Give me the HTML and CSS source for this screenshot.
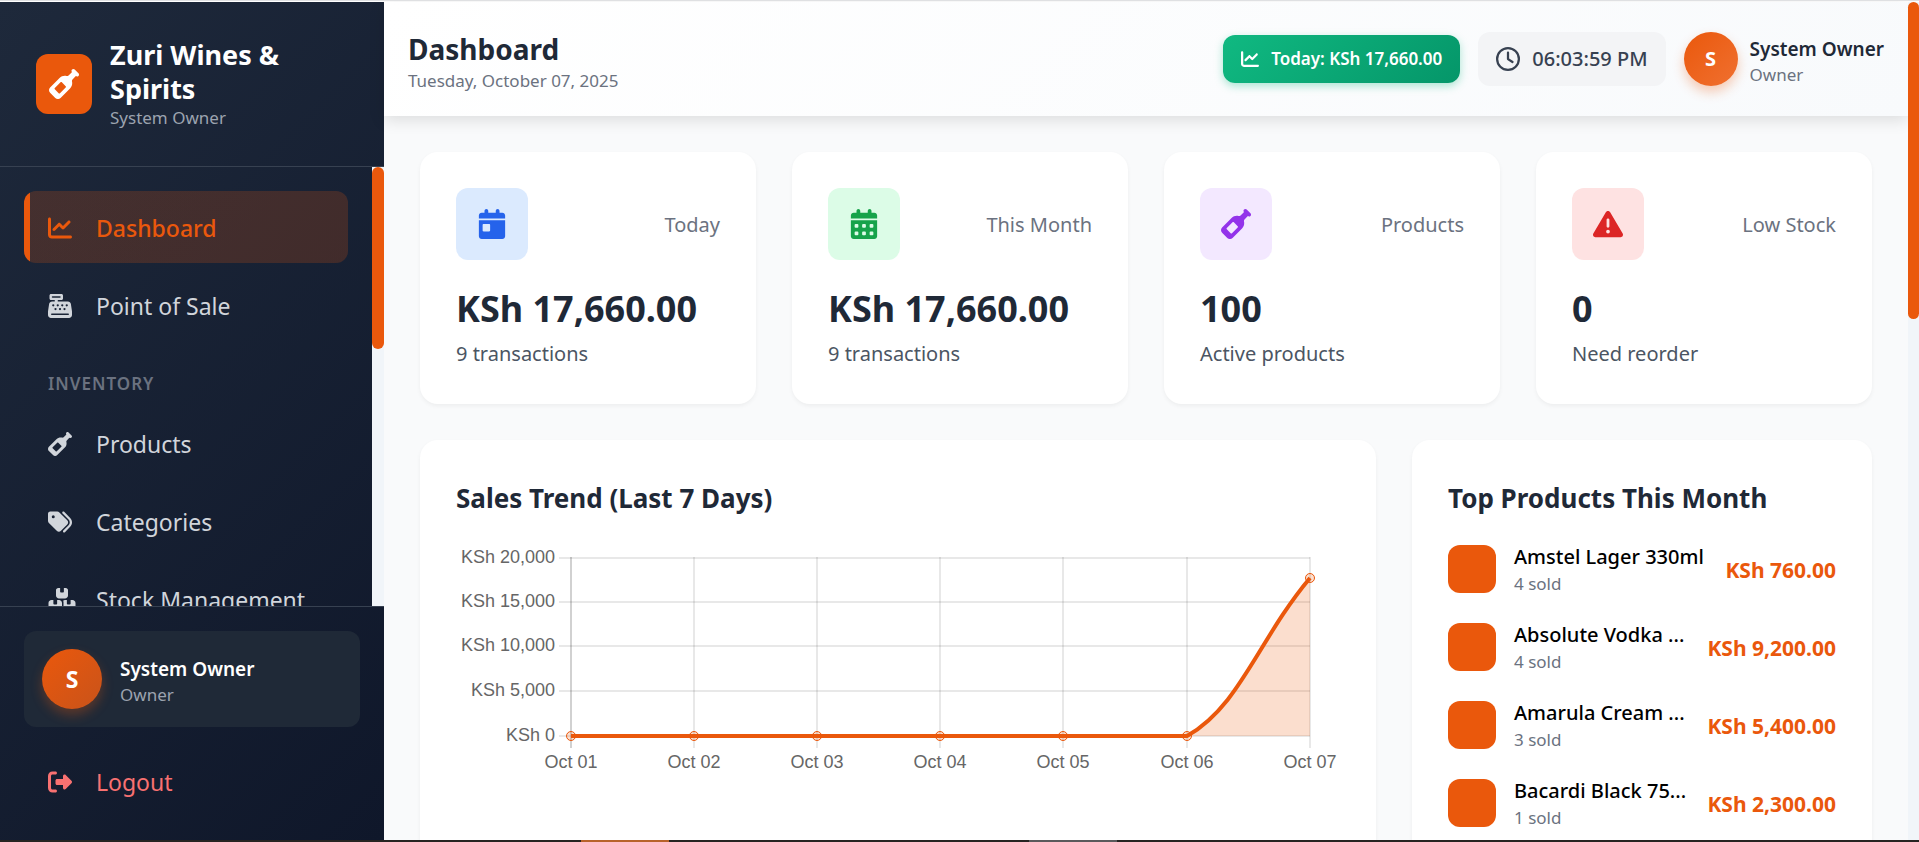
FILE: index.html
```html
<!DOCTYPE html>
<html lang="en">
<head>
<meta charset="utf-8">
<title>Dashboard - Zuri Wines &amp; Spirits</title>
<meta name="viewport" content="width=device-width, initial-scale=1">
<link rel="stylesheet" href="styles.css">
</head>
<body>
<svg class="sprite" aria-hidden="true">
  <symbol id="i-chart" viewBox="0 0 512 512"><path d="M64 64c0-17.700-14.300-32-32-32S0 46.300 0 64V400c0 44.200 35.800 80 80 80H480c17.700 0 32-14.300 32-32s-14.300-32-32-32H80c-8.800 0-16-7.200-16-16V64zm406.600 86.600c12.500-12.500 12.500-32.800 0-45.300s-32.800-12.500-45.300 0L320 210.700l-57.400-57.400c-12.500-12.500-32.800-12.500-45.300 0l-112 112c-12.500 12.500-12.500 32.800 0 45.300s32.800 12.500 45.300 0L240 221.300l57.400 57.400c12.500 12.500 32.800 12.500 45.300 0l128-128z"/></symbol>
  <symbol id="i-bottle" viewBox="0 0 512 512"><path d="M393.400 9.400c12.500-12.500 32.800-12.500 45.300 0l64 64c12.500 12.500 12.500 32.800 0 45.300c-11.800 11.800-30.700 12.500-43.200 1.900l-9.500 9.500-48.800 48.800c-9.200 9.200-11.500 22.900-8.600 35.600c9.400 40.900-1.900 85.600-33.800 117.500L197.300 493.300c-25 25-65.500 25-90.500 0l-88-88c-25-25-25-65.500 0-90.500L180.200 153.300c31.900-31.900 76.600-43.100 117.500-33.800c12.600 2.900 26.400 .5 35.500-8.600l48.800-48.800 9.500-9.500c-10.600-12.600-10-31.400 1.900-43.200zM99.300 347.300l65.400 65.400c6.200 6.200 16.400 6.200 22.600 0l97.400-97.400c6.200-6.200 6.200-16.400 0-22.600l-65.400-65.400c-6.200-6.200-16.400-6.200-22.600 0L99.300 324.700c-6.200 6.200-6.200 16.400 0 22.600z"/></symbol>
  <symbol id="i-register" viewBox="0 0 512 512"><path d="M64 0C46.300 0 32 14.300 32 32V96c0 17.700 14.300 32 32 32h80v32H87c-31.600 0-58.500 23.100-63.300 54.400L1.100 364.100C.4 368.800 0 373.600 0 378.400V448c0 35.300 28.700 64 64 64H448c35.300 0 64-28.700 64-64V378.400c0-4.800-.4-9.600-1.100-14.400L488.200 214.400C483.500 183.100 456.600 160 425 160H208V128h80c17.700 0 32-14.300 32-32V32c0-17.700-14.300-32-32-32H64zM96 48H256c8.800 0 16 7.200 16 16s-7.200 16-16 16H96c-8.800 0-16-7.200-16-16s7.200-16 16-16zM64 432c0-8.800 7.200-16 16-16H432c8.800 0 16 7.200 16 16s-7.200 16-16 16H80c-8.800 0-16-7.200-16-16zm48-168a24 24 0 1 1 0-48 24 24 0 1 1 0 48zm120-24a24 24 0 1 1 -48 0 24 24 0 1 1 48 0zM160 344a24 24 0 1 1 0-48 24 24 0 1 1 0 48zM328 240a24 24 0 1 1 -48 0 24 24 0 1 1 48 0zM256 344a24 24 0 1 1 0-48 24 24 0 1 1 0 48zM424 240a24 24 0 1 1 -48 0 24 24 0 1 1 48 0zM352 344a24 24 0 1 1 0-48 24 24 0 1 1 0 48z"/></symbol>
  <symbol id="i-tags" viewBox="0 0 512 512"><path d="M345 39.100L472.800 168.400c52.400 53 52.400 138.200 0 191.200L360.800 472.900c-9.300 9.400-24.500 9.500-33.900 .2s-9.500-24.500-.2-33.900L438.600 325.900c33.900-34.300 33.900-89.400 0-123.700L310.900 72.900c-9.300-9.400-9.200-24.600 .2-33.900s24.600-9.200 33.900 .2zM0 229.500V80C0 53.500 21.500 32 48 32H197.500c17 0 33.300 6.700 45.300 18.700l168 168c25 25 25 65.500 0 90.500L277.300 442.700c-25 25-65.500 25-90.500 0l-168-168C6.700 262.700 0 246.500 0 229.500zM144 144a32 32 0 1 0 -64 0 32 32 0 1 0 64 0z"/></symbol>
  <symbol id="i-boxes" viewBox="0 0 576 512"><path d="M248 0H208c-26.500 0-48 21.500-48 48V160c0 35.300 28.700 64 64 64H352c35.300 0 64-28.700 64-64V48c0-26.500-21.500-48-48-48H328V80c0 8.800-7.200 16-16 16H264c-8.800 0-16-7.200-16-16V0zM64 256c-35.300 0-64 28.700-64 64V448c0 35.300 28.700 64 64 64H224c35.300 0 64-28.700 64-64V320c0-35.300-28.700-64-64-64H184v80c0 8.800-7.200 16-16 16H120c-8.800 0-16-7.200-16-16V256H64zM352 512H512c35.300 0 64-28.700 64-64V320c0-35.300-28.700-64-64-64H472v80c0 8.800-7.200 16-16 16H408c-8.800 0-16-7.200-16-16V256H352c-15 0-28.800 5.100-39.700 13.800c4.900 10.400 7.700 22 7.700 34.200V464c0 12.200-2.800 23.800-7.700 34.200C323.200 506.900 337 512 352 512z"/></symbol>
  <symbol id="i-logout" viewBox="0 0 512 512"><path d="M377.900 105.900L500.700 228.700c7.200 7.200 11.300 17.100 11.300 27.300s-4.100 20.100-11.300 27.300L377.900 406.100c-6.400 6.400-15 9.900-24 9.900c-18.700 0-33.900-15.200-33.900-33.900l0-62.100-128 0c-17.700 0-32-14.300-32-32l0-64c0-17.700 14.300-32 32-32l128 0 0-62.100c0-18.700 15.200-33.900 33.900-33.900c9 0 17.600 3.600 24 9.900zM160 96L96 96c-17.700 0-32 14.300-32 32l0 256c0 17.700 14.300 32 32 32l64 0c17.700 0 32 14.300 32 32s-14.300 32-32 32l-64 0c-53 0-96-43-96-96L0 128C0 75 43 32 96 32l64 0c17.700 0 32 14.300 32 32s-14.300 32-32 32z"/></symbol>
  <symbol id="i-day" viewBox="0 0 448 512"><path d="M128 0c17.700 0 32 14.300 32 32V64H288V32c0-17.700 14.300-32 32-32s32 14.300 32 32V64h48c26.500 0 48 21.500 48 48v48H0V112C0 85.500 21.500 64 48 64H96V32c0-17.700 14.300-32 32-32zM0 192H448V464c0 26.500-21.500 48-48 48H48c-26.500 0-48-21.500-48-48V192zm80 64c-8.800 0-16 7.200-16 16v96c0 8.800 7.200 16 16 16h96c8.800 0 16-7.200 16-16V272c0-8.800-7.200-16-16-16H80z"/></symbol>
  <symbol id="i-days" viewBox="0 0 448 512"><path fill-rule="evenodd" d="M128 0c17.700 0 32 14.300 32 32V64H288V32c0-17.700 14.300-32 32-32s32 14.300 32 32V64h48c26.500 0 48 21.500 48 48v48H0V112C0 85.500 21.500 64 48 64H96V32c0-17.700 14.300-32 32-32zM0 192H448V464c0 26.500-21.500 48-48 48H48c-26.500 0-48-21.500-48-48V192zM80 256q-16 0-16 16v32q0 16 16 16h32q16 0 16-16v-32q0-16-16-16zM208 256q-16 0-16 16v32q0 16 16 16h32q16 0 16-16v-32q0-16-16-16zM336 256q-16 0-16 16v32q0 16 16 16h32q16 0 16-16v-32q0-16-16-16zM80 384q-16 0-16 16v32q0 16 16 16h32q16 0 16-16v-32q0-16-16-16zM208 384q-16 0-16 16v32q0 16 16 16h32q16 0 16-16v-32q0-16-16-16zM336 384q-16 0-16 16v32q0 16 16 16h32q16 0 16-16v-32q0-16-16-16z"/></symbol>
  <symbol id="i-warn" viewBox="0 0 512 512"><path d="M256 32c14.200 0 27.300 7.500 34.500 19.800l216 368c7.300 12.400 7.300 27.700 .2 40.100S486.300 480 472 480H40c-14.300 0-27.600-7.700-34.700-20.100s-7-27.800 .2-40.100l216-368C228.700 39.500 241.800 32 256 32zm0 128c-13.300 0-24 10.700-24 24V296c0 13.300 10.700 24 24 24s24-10.700 24-24V184c0-13.300-10.700-24-24-24zm32 224a32 32 0 1 0 -64 0 32 32 0 1 0 64 0z"/></symbol>
  <symbol id="i-clock" viewBox="0 0 512 512"><path d="M464 256A208 208 0 1 1 48 256a208 208 0 1 1 416 0zM0 256a256 256 0 1 0 512 0A256 256 0 1 0 0 256zM232 120V256c0 8 4 15.500 10.700 20l96 64c11 7.400 25.900 4.400 33.300-6.700s4.400-25.900-6.700-33.300L280 243.200V120c0-13.300-10.700-24-24-24s-24 10.700-24 24z"/></symbol>
</svg>

<div class="app">
  <aside class="sidebar">
    <div class="brand">
      <span class="brand-logo"><svg class="icon icon-lg"><use href="#i-bottle"/></svg></span>
      <div>
        <div class="brand-name">Zuri Wines &amp; Spirits</div>
        <div class="role">System Owner</div>
      </div>
    </div>
    <div class="nav-wrap">
      <nav class="nav">
        <a class="nav-item active" href="#dashboard"><svg class="icon"><use href="#i-chart"/></svg>Dashboard</a>
        <a class="nav-item" href="#pos"><svg class="icon"><use href="#i-register"/></svg>Point of Sale</a>
        <div class="nav-label">Inventory</div>
        <a class="nav-item" href="#products"><svg class="icon"><use href="#i-bottle"/></svg>Products</a>
        <a class="nav-item" href="#categories"><svg class="icon"><use href="#i-tags"/></svg>Categories</a>
        <a class="nav-item" href="#stock"><svg class="icon icon-wide"><use href="#i-boxes"/></svg>Stock Management</a>
      </nav>
      <div class="track"><div class="thumb thumb-nav"></div></div>
    </div>
    <div class="side-foot">
      <div class="user-card">
        <span class="avatar avatar-lg">S</span>
        <div class="who">
          <div class="user-name">System Owner</div>
          <div class="role">Owner</div>
        </div>
      </div>
      <a class="nav-item logout" href="#logout"><svg class="icon"><use href="#i-logout"/></svg>Logout</a>
    </div>
  </aside>

  <div class="main">
    <header class="topbar">
      <div class="who">
        <h1 class="page-title">Dashboard</h1>
        <div class="role muted">Tuesday, October 07, 2025</div>
      </div>
      <div class="top-tools">
        <div class="today"><svg class="icon icon-sm"><use href="#i-chart"/></svg>Today: KSh 17,660.00</div>
        <div class="clock"><svg class="icon"><use href="#i-clock"/></svg>06:03:59 PM</div>
        <div class="profile">
          <span class="avatar">S</span>
          <div class="who">
            <div class="user-name">System Owner</div>
            <div class="role muted">Owner</div>
          </div>
        </div>
      </div>
    </header>

    <main class="content">
      <section class="stats">
        <article class="card">
          <div class="stat-head"><span class="tile blue"><svg class="icon icon-lg"><use href="#i-day"/></svg></span><span class="stat-label">Today</span></div>
          <div class="stat-value">KSh 17,660.00</div>
          <div class="stat-note">9 transactions</div>
        </article>
        <article class="card">
          <div class="stat-head"><span class="tile green"><svg class="icon icon-lg"><use href="#i-days"/></svg></span><span class="stat-label">This Month</span></div>
          <div class="stat-value">KSh 17,660.00</div>
          <div class="stat-note">9 transactions</div>
        </article>
        <article class="card">
          <div class="stat-head"><span class="tile purple"><svg class="icon icon-lg"><use href="#i-bottle"/></svg></span><span class="stat-label">Products</span></div>
          <div class="stat-value">100</div>
          <div class="stat-note">Active products</div>
        </article>
        <article class="card">
          <div class="stat-head"><span class="tile red"><svg class="icon icon-lg"><use href="#i-warn"/></svg></span><span class="stat-label">Low Stock</span></div>
          <div class="stat-value">0</div>
          <div class="stat-note">Need reorder</div>
        </article>
      </section>

      <section class="panels">
        <article class="card panel-wide">
          <h2 class="panel-title">Sales Trend (Last 7 Days)</h2>
          <svg class="chart" viewBox="0 -2 884 302" role="img" aria-label="Sales for the last seven days">
            <g class="grid">
              <path d="M103 14H854M103 58H854M103 102H854M103 147H854M103 192H854"/>
              <path d="M238 13V204M361 13V204M484 13V204M607 13V204M731 13V204M854 13V204"/>
            </g>
            <path class="axis" d="M115 13V204"/>
            <path class="area" d="M731 192C784 162 802 96 854 34V192Z"/>
            <path class="line" d="M115 192H731C784 162 802 96 854 34"/>
            <g class="dots">
              <circle cx="115" cy="192" r="4.500"/><circle cx="238" cy="192" r="4.500"/><circle cx="361" cy="192" r="4.500"/><circle cx="484" cy="192" r="4.500"/><circle cx="607" cy="192" r="4.500"/><circle cx="731" cy="192" r="4.500"/><circle cx="854" cy="34" r="4.500"/>
            </g>
            <g class="ticks ticks-y">
              <text x="99" y="19">KSh 20,000</text><text x="99" y="63">KSh 15,000</text><text x="99" y="107">KSh 10,000</text><text x="99" y="152">KSh 5,000</text><text x="99" y="197">KSh 0</text>
            </g>
            <g class="ticks ticks-x">
              <text x="115" y="224">Oct 01</text><text x="238" y="224">Oct 02</text><text x="361" y="224">Oct 03</text><text x="484" y="224">Oct 04</text><text x="607" y="224">Oct 05</text><text x="731" y="224">Oct 06</text><text x="854" y="224">Oct 07</text>
            </g>
          </svg>
        </article>
        <article class="card">
          <h2 class="panel-title">Top Products This Month</h2>
          <ul class="products">
            <li class="product"><span class="swatch"></span><div class="product-info"><div class="product-name">Amstel Lager 330ml</div><div class="role muted">4 sold</div></div><span class="price">KSh 760.00</span></li>
            <li class="product"><span class="swatch"></span><div class="product-info"><div class="product-name">Absolute Vodka ...</div><div class="role muted">4 sold</div></div><span class="price">KSh 9,200.00</span></li>
            <li class="product"><span class="swatch"></span><div class="product-info"><div class="product-name">Amarula Cream ...</div><div class="role muted">3 sold</div></div><span class="price">KSh 5,400.00</span></li>
            <li class="product"><span class="swatch"></span><div class="product-info"><div class="product-name">Bacardi Black 75...</div><div class="role muted">1 sold</div></div><span class="price">KSh 2,300.00</span></li>
          </ul>
        </article>
      </section>
    </main>
  </div>
  <div class="track track-page"><div class="thumb thumb-page"></div></div>
</div>
<div class="taskbar"><span class="task task-a"></span><span class="task task-b"></span></div>
</body>
</html>
```
FILE: styles.css
```css
:root {
  --orange: #ea580c;
  --ink: #1f2937;
  --muted: #6b7280;
}

* { box-sizing: border-box; }

body {
  margin: 0;
  height: 100vh;
  display: flex;
  flex-direction: column;
  overflow: hidden;
  border-top: 1px solid #dfe0e2;
  padding-top: 1px;
  background: #fff;
  color: var(--ink);
  font-family: "Noto Sans", "Open Sans", sans-serif;
  font-size: 20px;
  line-height: 30px;
}

h1, h2, ul { margin: 0; padding: 0; }
a { color: inherit; text-decoration: none; }

.sprite { display: none; }

.icon { width: 24px; height: 24px; flex: none; fill: currentColor; }
.icon-wide { width: 28px; margin-right: -4px; }
.icon-sm { width: 18px; height: 18px; }
.icon-lg { width: 30px; height: 30px; }

.app {
  flex: 1;
  min-height: 0;
  display: flex;
  background: #f9fafb;
}

/* Sidebar */
.sidebar {
  width: 384px;
  flex: none;
  display: flex;
  flex-direction: column;
  background: linear-gradient(135deg, #1e293b 0%, #0f172a 100%);
  color: #d1d5db;
}

.brand {
  display: flex;
  align-items: center;
  gap: 18px;
  padding: 36px;
  border-bottom: 1px solid #374151;
}

.brand-logo {
  display: grid;
  place-items: center;
  width: 56px;
  height: 60px;
  flex: none;
  border-radius: 12px;
  background: var(--orange);
  color: #fff;
}

.brand-name {
  color: #fff;
  font-size: 27px;
  font-weight: 700;
  line-height: 34px;
}

.role {
  color: #9ca3af;
  font-size: 17px;
  line-height: 24px;
}
.muted { color: var(--muted); }

.nav-wrap {
  flex: 1;
  min-height: 0;
  display: flex;
}

.nav {
  flex: 1;
  overflow: hidden;
  display: flex;
  flex-direction: column;
  gap: 6px;
  padding: 24px;
}

.nav-item {
  flex: none;
  display: flex;
  align-items: center;
  gap: 24px;
  height: 72px;
  padding: 2px 24px 0;
  border-radius: 12px;
  font-size: 23px;
  line-height: 36px;
}

.nav-item.active {
  background: linear-gradient(to right, var(--orange) 6px, rgba(234, 88, 12, 0.2) 6px);
  color: var(--orange);
  font-weight: 500;
}

.nav-label {
  padding: 25px 24px 5px;
  color: #6b7280;
  font-size: 17px;
  font-weight: 600;
  letter-spacing: 1px;
  line-height: 24px;
  text-transform: uppercase;
}

.track {
  width: 12px;
  flex: none;
  background: #f1f5f9;
}
.track-page { width: 11px; }
.thumb { border-radius: 6px; background: var(--orange); }
.thumb-nav { height: 182px; }
.thumb-page { height: 317px; }

.side-foot {
  display: flex;
  flex-direction: column;
  gap: 18px;
  padding: 24px 24px 23px;
  border-top: 1px solid #374151;
}

.user-card {
  display: flex;
  align-items: center;
  gap: 18px;
  padding: 18px;
  border-radius: 12px;
  background: #1f2937;
}
.user-card .user-name { color: #fff; }

.who { padding-top: 3px; }

.user-name {
  font-size: 19px;
  font-weight: 600;
  line-height: 28px;
}

.avatar {
  display: grid;
  place-items: center;
  width: 54px;
  height: 54px;
  flex: none;
  border-radius: 50%;
  background: linear-gradient(135deg, #ea580c, #f07030);
  box-shadow: 0 6px 12px rgba(234, 88, 12, 0.3);
  color: #fff;
  font-size: 20px;
  font-weight: 700;
}
.avatar-lg {
  width: 60px;
  height: 60px;
  background: linear-gradient(135deg, #ea580c, #c9531a);
  font-size: 23px;
}

.logout { color: #f87171; }

/* Top bar */
.main {
  flex: 1;
  min-width: 0;
  display: flex;
  flex-direction: column;
}

.topbar {
  display: flex;
  align-items: center;
  justify-content: space-between;
  padding: 22px 24px;
  min-height: 114px;
  background: linear-gradient(135deg, #fff 0%, #f8fafc 100%);
  box-shadow: 0 4px 15px rgba(0, 0, 0, 0.12);
}

.page-title {
  font-size: 28px;
  font-weight: 700;
  line-height: 40px;
}

.top-tools { display: flex; align-items: center; gap: 18px; }

.today {
  display: flex;
  align-items: center;
  gap: 12px;
  height: 48px;
  padding: 0 18px;
  border-radius: 12px;
  background: linear-gradient(135deg, #10b981, #059669);
  box-shadow: 0 3px 9px rgba(16, 185, 129, 0.35);
  color: #fff;
  font-size: 17px;
  font-weight: 600;
}

.clock {
  display: flex;
  align-items: center;
  gap: 12px;
  height: 54px;
  padding: 0 18px;
  border-radius: 12px;
  background: #f3f4f6;
  color: #374151;
  font-weight: 500;
}

.profile { display: flex; align-items: center; gap: 12px; }

/* Content */
.content {
  flex: 1;
  min-height: 0;
  display: flex;
  flex-direction: column;
  gap: 36px;
  padding: 36px 36px 0;
  overflow: hidden;
}

.card {
  min-width: 0;
  padding: 36px;
  border-radius: 18px;
  background: #fff;
  box-shadow: 0 2px 4px rgba(0, 0, 0, 0.05);
}

.stats {
  display: grid;
  grid-template-columns: repeat(4, 1fr);
  gap: 36px;
}

.stat-head {
  display: flex;
  align-items: center;
  justify-content: space-between;
  margin-bottom: 24px;
}

.tile {
  display: grid;
  place-items: center;
  width: 72px;
  height: 72px;
  border-radius: 12px;
}
.blue { background: #dbeafe; color: #2563eb; }
.green { background: #dcfce7; color: #16a34a; }
.purple { background: #f3e8ff; color: #9333ea; }
.red { background: #fee2e2; color: #dc2626; }

.stat-label { padding-top: 2px; color: var(--muted); }

.stat-value {
  font-size: 36px;
  font-weight: 700;
  line-height: 50px;
}

.stat-note {
  margin-top: 6px;
  color: #4b5563;
  line-height: 28px;
}

.panels {
  flex: none;
  display: grid;
  grid-template-columns: repeat(3, 1fr);
  gap: 36px;
}
.panel-wide { grid-column: span 2; }

.panel-title {
  margin-bottom: 22px;
  font-size: 26px;
  font-weight: 700;
  line-height: 44px;
}

.chart { display: block; width: 100%; }
.grid path { fill: none; stroke: rgba(0, 0, 0, 0.09); stroke-width: 2; }
.axis { stroke: rgba(0, 0, 0, 0.18); stroke-width: 2; }
.area { fill: rgba(234, 88, 12, 0.2); }
.line { fill: none; stroke: var(--orange); stroke-width: 4; }
.dots circle { fill: rgba(234, 88, 12, 0.2); stroke: var(--orange); stroke-width: 1; }
.ticks { fill: #666; font-family: "Liberation Sans", Arial, sans-serif; font-size: 18px; }
.ticks-y { text-anchor: end; }
.ticks-x { text-anchor: middle; }

.products {
  display: flex;
  flex-direction: column;
  gap: 24px;
  list-style: none;
}

.product { display: flex; align-items: center; gap: 18px; }

.swatch {
  width: 48px;
  height: 48px;
  flex: none;
  border-radius: 12px;
  background: var(--orange);
}

.product-info { flex: 1; min-width: 0; }

.product-name {
  color: #000;
  font-weight: 500;
  line-height: 30px;
  white-space: nowrap;
}

.price { padding-top: 2px; color: var(--orange); font-size: 21px; font-weight: 700; white-space: nowrap; }

/* Strip below the window */
.taskbar {
  flex: none;
  display: flex;
  height: 2px;
  padding-left: 581px;
  gap: 360px;
  background: #262422;
}
.task { width: 88px; }
.task-a { background: #b8622a; }
.task-b { background: #5a5a5c; }
```
